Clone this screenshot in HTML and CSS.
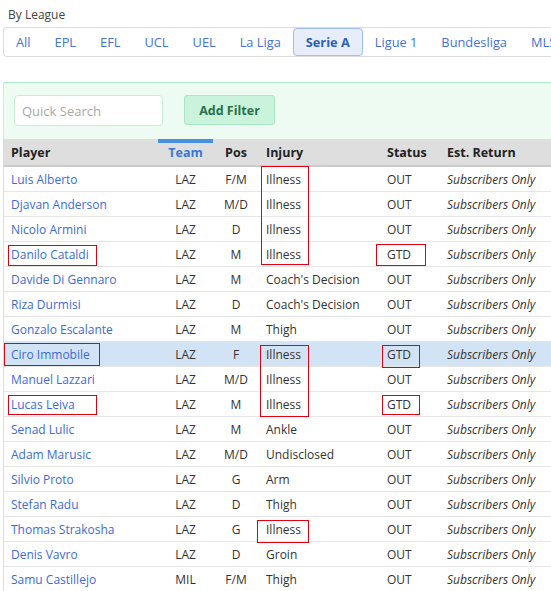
FILE: index.html
```html
<!DOCTYPE html>
<html>
<head>
<meta charset="utf-8">
<link rel="stylesheet" href="styles.css">
</head>
<body>
<div class="page">
  <div class="label">By League</div>
  <div class="tabs">
    <span class="tab">All</span>
    <span class="tab">EPL</span>
    <span class="tab">EFL</span>
    <span class="tab">UCL</span>
    <span class="tab">UEL</span>
    <span class="tab">La Liga</span>
    <span class="tab active">Serie A</span>
    <span class="tab">Ligue 1</span>
    <span class="tab">Bundesliga</span>
    <span class="tab">MLS</span>
  </div>

  <div class="filters">
    <input class="search" type="text" placeholder="Quick Search">
    <button class="add">Add Filter</button>
  </div>

  <div class="tablewrap">
    <table class="grid">
      <colgroup>
        <col class="c-player"><col class="c-team"><col class="c-pos"><col class="c-inj"><col class="c-status"><col class="c-ret">
      </colgroup>
      <thead>
        <tr>
          <th class="left">Player</th>
          <th class="center sorted">Team</th>
          <th class="center">Pos</th>
          <th class="left">Injury</th>
          <th class="left">Status</th>
          <th class="left">Est. Return</th>
        </tr>
      </thead>
      <tbody>
        <tr><td class="name">Luis Alberto</td><td class="center">LAZ</td><td class="center">F/M</td><td>Illness</td><td>OUT</td><td class="ret">Subscribers Only</td></tr>
        <tr><td class="name">Djavan Anderson</td><td class="center">LAZ</td><td class="center">M/D</td><td>Illness</td><td>OUT</td><td class="ret">Subscribers Only</td></tr>
        <tr><td class="name">Nicolo Armini</td><td class="center">LAZ</td><td class="center">D</td><td>Illness</td><td>OUT</td><td class="ret">Subscribers Only</td></tr>
        <tr><td class="name">Danilo Cataldi</td><td class="center">LAZ</td><td class="center">M</td><td>Illness</td><td>GTD</td><td class="ret">Subscribers Only</td></tr>
        <tr><td class="name">Davide Di Gennaro</td><td class="center">LAZ</td><td class="center">M</td><td>Coach's Decision</td><td>OUT</td><td class="ret">Subscribers Only</td></tr>
        <tr><td class="name">Riza Durmisi</td><td class="center">LAZ</td><td class="center">D</td><td>Coach's Decision</td><td>OUT</td><td class="ret">Subscribers Only</td></tr>
        <tr><td class="name">Gonzalo Escalante</td><td class="center">LAZ</td><td class="center">M</td><td>Thigh</td><td>OUT</td><td class="ret">Subscribers Only</td></tr>
        <tr class="hl"><td class="name">Ciro Immobile</td><td class="center">LAZ</td><td class="center">F</td><td>Illness</td><td>GTD</td><td class="ret">Subscribers Only</td></tr>
        <tr><td class="name">Manuel Lazzari</td><td class="center">LAZ</td><td class="center">M/D</td><td>Illness</td><td>OUT</td><td class="ret">Subscribers Only</td></tr>
        <tr><td class="name">Lucas Leiva</td><td class="center">LAZ</td><td class="center">M</td><td>Illness</td><td>GTD</td><td class="ret">Subscribers Only</td></tr>
        <tr><td class="name">Senad Lulic</td><td class="center">LAZ</td><td class="center">M</td><td>Ankle</td><td>OUT</td><td class="ret">Subscribers Only</td></tr>
        <tr><td class="name">Adam Marusic</td><td class="center">LAZ</td><td class="center">M/D</td><td>Undisclosed</td><td>OUT</td><td class="ret">Subscribers Only</td></tr>
        <tr><td class="name">Silvio Proto</td><td class="center">LAZ</td><td class="center">G</td><td>Arm</td><td>OUT</td><td class="ret">Subscribers Only</td></tr>
        <tr><td class="name">Stefan Radu</td><td class="center">LAZ</td><td class="center">D</td><td>Thigh</td><td>OUT</td><td class="ret">Subscribers Only</td></tr>
        <tr><td class="name">Thomas Strakosha</td><td class="center">LAZ</td><td class="center">G</td><td>Illness</td><td>OUT</td><td class="ret">Subscribers Only</td></tr>
        <tr><td class="name">Denis Vavro</td><td class="center">LAZ</td><td class="center">D</td><td>Groin</td><td>OUT</td><td class="ret">Subscribers Only</td></tr>
        <tr><td class="name">Samu Castillejo</td><td class="center">MIL</td><td class="center">F/M</td><td>Thigh</td><td>OUT</td><td class="ret">Subscribers Only</td></tr>
      </tbody>
    </table>
  </div>

  <div class="mark m1"></div>
  <div class="mark m2"></div>
  <div class="mark m3"></div>
  <div class="mark m4"></div>
  <div class="mark m5"></div>
  <div class="mark m6"></div>
  <div class="mark m7"></div>
  <div class="mark m8"></div>
  <div class="mark m9"></div>
</div>
</body>
</html>
```

FILE: styles.css
```css
html, body {
  margin: 0;
  padding: 0;
  overflow: hidden;
  background: #fff;
}
body {
  font-family: "Open Sans", "Liberation Sans", sans-serif;
  color: #333;
}
.page {
  position: relative;
  width: 640px;
}
.label {
  height: 27px;
  line-height: 29px;
  padding-left: 8px;
  font-size: 12px;
  color: #444;
}
.tabs {
  margin-left: 3px;
  height: 30px;
  box-sizing: border-box;
  border: 1px solid #dcdcdc;
  border-right: none;
  border-radius: 4px 0 0 4px;
  display: flex;
  align-items: stretch;
}
.tab {
  height: 28px;
  line-height: 28px;
  padding: 0 12px;
  font-size: 12.8px;
  color: #4473d6;
  white-space: nowrap;
}
.tab.active {
  box-sizing: border-box;
  line-height: 26px;
  border: 1px solid #9dc0ee;
  border-radius: 4px;
  background: #e7eef9;
  color: #2c5fb8;
  font-weight: 700;
}
.filters {
  margin-top: 25px;
  margin-left: 3px;
  height: 57px;
  box-sizing: border-box;
  border-top: 1px solid #b2ebca;
  border-left: 1px solid #c8f0d8;
  background: #eefbf3;
  display: flex;
  align-items: flex-start;
  padding: 12px 0 0 10px;
  gap: 21px;
}
.search {
  width: 149px;
  height: 31px;
  box-sizing: border-box;
  border: 1px solid #c6eed7;
  border-radius: 4px;
  background: #fff;
  padding: 0 7px;
  font-family: "Open Sans", "Liberation Sans", sans-serif;
  font-size: 13px;
  color: #333;
  outline: none;
}
.search::placeholder {
  color: #a8a8a8;
}
.add {
  width: 91px;
  height: 30px;
  box-sizing: border-box;
  border: 1px solid #a9e6c3;
  border-radius: 3px;
  background: #c9f4db;
  color: #2b7048;
  font-family: "Open Sans", "Liberation Sans", sans-serif;
  font-weight: 700;
  font-size: 12.5px;
  padding: 0;
}
.tablewrap {
  margin-left: 3px;
  border-left: 1px solid #dcdcdc;
}
.grid {
  border-collapse: collapse;
  table-layout: fixed;
  width: 596px;
  font-size: 12px;
}
.c-player { width: 154px; }
.c-team { width: 55px; }
.c-pos { width: 46px; }
.c-inj { width: 121px; }
.c-status { width: 60px; }
.c-ret { width: 160px; }
.grid th {
  height: 27px;
  padding: 1px 7px 0;
  box-sizing: border-box;
  background: #dedede;
  border-bottom: 2px solid #cbcbcb;
  font-weight: 700;
  font-size: 12.5px;
  color: #222;
  white-space: nowrap;
}
.grid th.left { text-align: left; }
.grid th.center { padding: 1px 0 0; }
.grid th.sorted {
  color: #3b78d6;
  box-shadow: inset 0 4px 0 #4a90e2;
}
.grid td {
  height: 24px;
  line-height: 23px;
  padding: 1px 7px 0;
  box-sizing: border-box;
  border-bottom: 1px solid #e6e6e6;
  white-space: nowrap;
  color: #333;
}
.grid td.center {
  text-align: center;
  padding: 1px 0 0;
}
.grid td.name { color: #3b6bd6; }
.grid td.ret { font-style: italic; }
.grid tr.hl td { background: #d3e3f6; }

.mark {
  position: absolute;
  box-sizing: border-box;
  border: 1px solid #e30010;
}
.m1 { left: 261px; top: 166px; width: 48px; height: 99px; }
.m2 { left: 8px; top: 245px; width: 89px; height: 21px; }
.m3 { left: 376px; top: 244px; width: 50px; height: 22px; }
.m4 { left: 4px; top: 343px; width: 96px; height: 23px; }
.m5 { left: 260px; top: 345px; width: 49px; height: 72px; }
.m6 { left: 382px; top: 345px; width: 38px; height: 23px; }
.m7 { left: 8px; top: 395px; width: 89px; height: 20px; }
.m8 { left: 382px; top: 395px; width: 38px; height: 20px; }
.m9 { left: 257px; top: 520px; width: 52px; height: 23px; }
```
